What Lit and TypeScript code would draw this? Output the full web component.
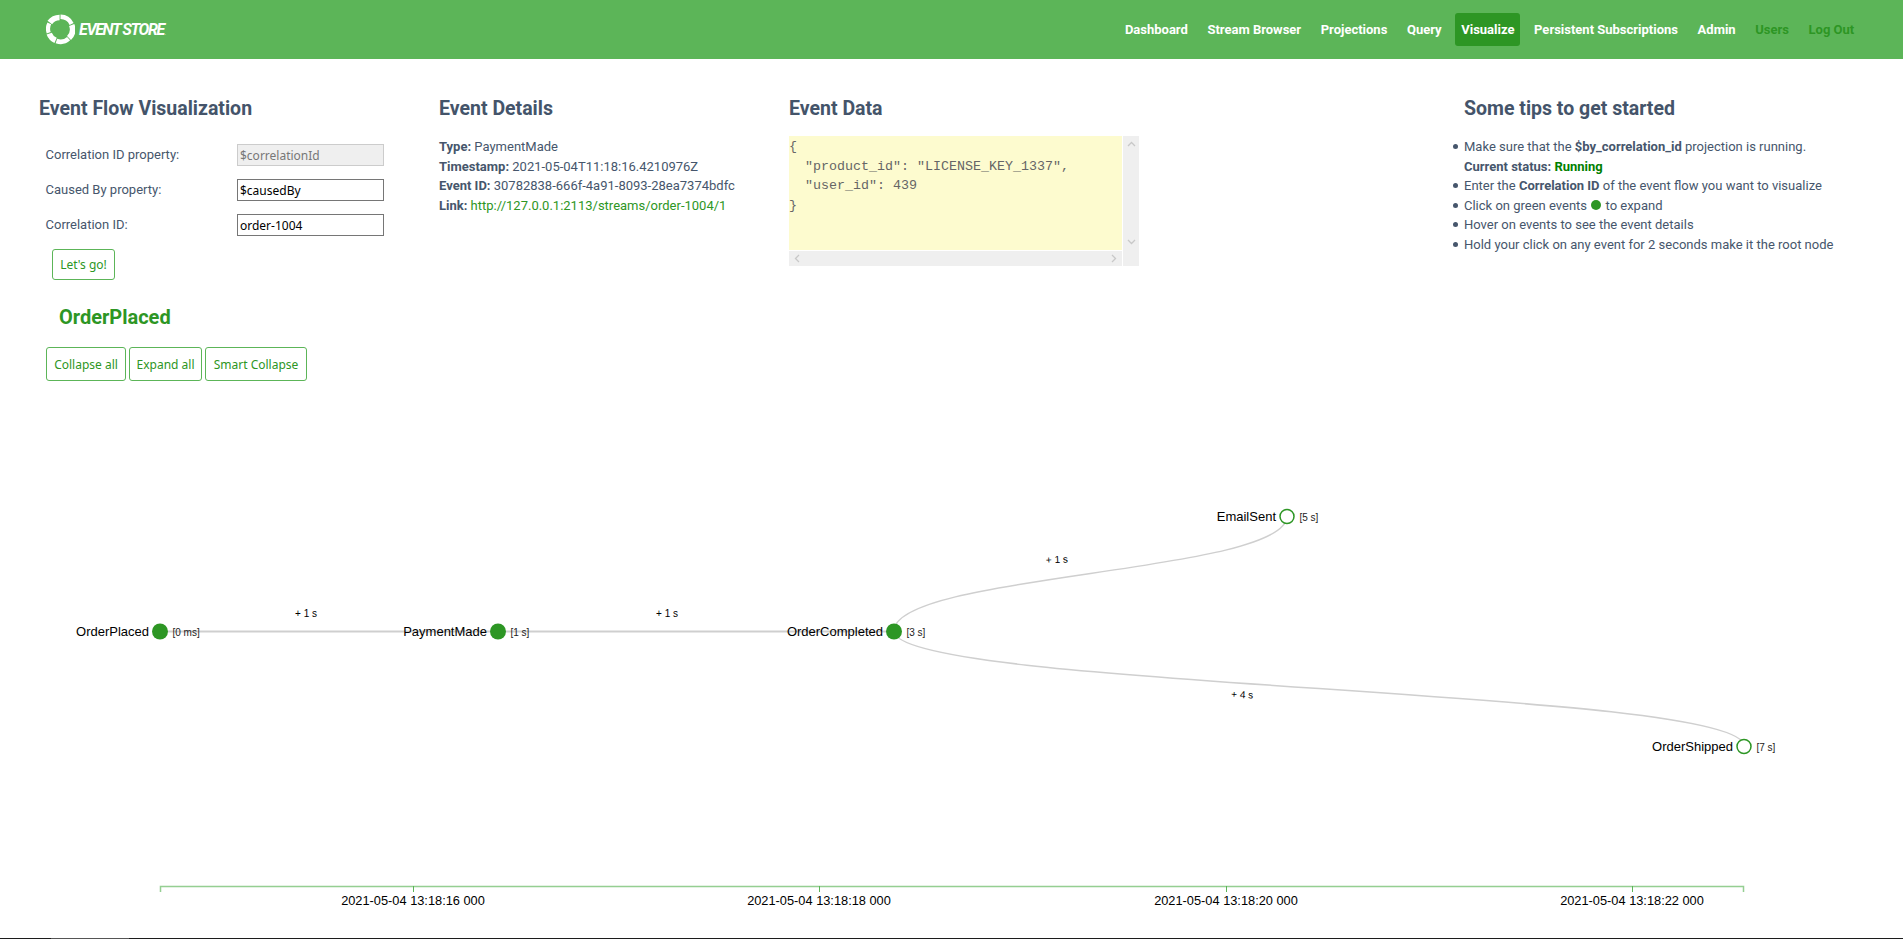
import { LitElement, html, css, svg } from "lit";
import { customElement } from "lit/decorators.js";

const NAV = [
  ["Dashboard", ""], ["Stream Browser", ""], ["Projections", ""], ["Query", ""], ["Visualize", "active"],
  ["Persistent Subscriptions", ""], ["Admin", ""], ["Users", "dim"], ["Log Out", "dim"],
];
const NODES = [
  { x: 160, y: 631, name: "OrderPlaced", t: "[0 ms]", filled: true },
  { x: 498, y: 631, name: "PaymentMade", t: "[1 s]", filled: true },
  { x: 894, y: 631, name: "OrderCompleted", t: "[3 s]", filled: true },
  { x: 1287, y: 516, name: "EmailSent", t: "[5 s]", filled: false },
  { x: 1744, y: 746, name: "OrderShipped", t: "[7 s]", filled: false },
];
const LINKS = [
  { d: "M160,631.5 L498,631.5", w: 2 },
  { d: "M498,631.5 L894,631.5", w: 2 },
  { d: "M894,631 C894,573.5 1287,573.5 1287,516", w: 1.5 },
  { d: "M894,631 C894,688.5 1744,688.5 1744,746", w: 1.5 },
];
const LINK_LABELS = [
  { x: 306, y: 617, t: "+ 1 s", r: 0 },
  { x: 667, y: 617, t: "+ 1 s", r: 0 },
  { x: 1057, y: 563, t: "+ 1 s", r: -3 },
  { x: 1242, y: 698, t: "+ 4 s", r: 3 },
];
const TICKS = [
  { x: 413, t: "2021-05-04 13:18:16 000" },
  { x: 819, t: "2021-05-04 13:18:18 000" },
  { x: 1226, t: "2021-05-04 13:18:20 000" },
  { x: 1632, t: "2021-05-04 13:18:22 000" },
];

@customElement("app-root")
export class AppRoot extends LitElement {
  static styles = css`
    :host { display: block; height: 939px; overflow: hidden; background: #fff; font-family: Roboto, "Liberation Sans", sans-serif; font-size: 13px; line-height: 19.5px; color: #46566c; }
    header { height: 59px; background: #5cb558; display: flex; align-items: center; justify-content: space-between; padding: 0 39px 0 46px; }
    .logo { display: flex; align-items: center; gap: 4px; color: #fff; }
    .logo svg { display: block; }
    .logo span { font: italic 700 16px/1 Roboto, sans-serif; letter-spacing: -1.35px; white-space: nowrap; }
    .logo small { font-size: 4px; letter-spacing: 0; margin-left: 1px; }
    nav { display: flex; align-items: center; gap: 0; }
    nav a { display: block; padding: 0 9.8px; height: 33px; line-height: 33px; border-radius: 3px; color: #fff; font-weight: 700; font-size: 13px; white-space: nowrap; }
    nav a.active { background: #2d9624; padding: 0 6px; margin: 0 3.8px; }
    nav a.dim { color: #2d9624; }
    .top { height: 341px; display: grid; grid-template-columns: 400px 350px 674px 1fr; padding: 40px 0 0 39px; box-sizing: border-box; }
    h2 { margin: 0; font-size: 19.5px; line-height: 20px; font-weight: 700; color: #44546a; height: 37px; }
    .details h2, .tips h2 { height: 38px; }
    .tips h2 { margin-left: 1px; }
    .form { display: grid; grid-template-columns: 191.5px 147px; row-gap: 13px; align-items: center; padding: 8px 0 0 6.5px; }
    .form label { line-height: 22px; }
    input { box-sizing: border-box; width: 147px; height: 22px; margin: 0; padding: 0 2px; border: 1px solid #767676; border-radius: 0; font: 12px "Noto Sans", sans-serif; color: #000; background: #fff; outline: none; }
    input:disabled { background: #efefef; border-color: #ccc; color: #777; }
    .btn { box-sizing: border-box; display: inline-flex; align-items: center; justify-content: center; height: 34px; border: 1px solid #5cb558; border-radius: 3px; background: #fff; color: #2d9624; font: 12px "Noto Sans", sans-serif; padding: 0; }
    .go { width: 63px; height: 31px; margin: 13px 0 0 13px; display: flex; }
    .sel { margin: 26px 0 0 20px; font-size: 20px; line-height: 22px; font-weight: 700; color: #2d9624; }
    .btns { display: flex; gap: 3px; margin: 19px 0 0 7px; }
    .details { line-height: 19.5px; white-space: nowrap; }
    .details a { color: #2d9624; }
    b { font-weight: 700; }
    .data { display: grid; grid-template-columns: 333px 17px; grid-template-rows: 114px 16px; width: 350px; column-gap: 0; background: #fff; }
    .yellow { background: #fdfbcf; font: 13.33px/19.5px "Liberation Mono", monospace; color: #666; white-space: pre; padding-top: 1px; box-sizing: border-box; }
    .vbar { grid-row: 1 / 3; grid-column: 2; background: #efefef; margin-left: 1px; display: flex; flex-direction: column; justify-content: space-between; align-items: center; padding: 4px 0 20px; box-sizing: border-box; }
    .hbar { background: #efefef; margin-top: 1px; display: flex; justify-content: space-between; align-items: center; padding: 0 4px; }
    .vbar svg, .hbar svg { display: block; }
    ul { margin: 0; padding: 0 0 0 1px; list-style: none; }
    .tips li { position: relative; }
    .tips li::before { content: ""; position: absolute; left: -11px; top: 7px; width: 5px; height: 5px; border-radius: 50%; background: #46566c; }
    .status { color: #008000; font-weight: 700; }
    .dot { display: inline-block; width: 10px; height: 10px; border-radius: 50%; background: #2d9624; vertical-align: 0; margin: 0 1px; }
    svg.graph { display: block; width: 1903px; height: 538px; }
    .link { fill: none; stroke: #cfcfcf; }
    .nm { font: 13px "Liberation Sans", sans-serif; fill: #000; text-anchor: end; }
    .tm { font: 10px "Liberation Sans", sans-serif; fill: #222; }
    .ll { font: 10px "Liberation Sans", sans-serif; fill: #000; text-anchor: middle; }
    .axis { font: 12.8px "Liberation Sans", sans-serif; fill: #000; text-anchor: middle; }
    .edge { height: 1px; background: linear-gradient(90deg, #1c1c1c 51px, #555 51px, #555 129px, #1c1c1c 129px); }
  `;

  private chev(rot: number) {
    return html`<svg width="9" height="9" viewBox="0 0 9 9" style="transform:rotate(${rot}deg)"><path d="M1 6 L4.5 2.5 L8 6" fill="none" stroke="#c8c8c8" stroke-width="1.3"/></svg>`;
  }

  render() {
    return html`
      <header>
        <div class="logo">
          <svg width="29" height="31" viewBox="0 0 29 31" fill="none" stroke="#fff">
            <path d="M3.8 8.5 A12 12 0 0 1 13.6 3.5" stroke-width="5.6"/>
            <path d="M14.5 2.8 A12.4 12.4 0 0 1 25.6 10" stroke-width="4.4"/>
            <path d="M25.7 11 A12 12 0 0 1 23 24" stroke-width="5.6"/>
            <path d="M22.6 24.6 A12 12 0 0 1 10.4 27" stroke-width="4.6"/>
            <path d="M9.6 26.4 A12 12 0 0 1 3.2 19.6" stroke-width="5.6"/>
            <path d="M2.7 18.8 A12 12 0 0 1 3.3 9.4" stroke-width="4.2"/>
          </svg>
          <span>EVENT STORE<small>.</small></span>
        </div>
        <nav>${NAV.map(([t, c]) => html`<a class=${c}>${t}</a>`)}</nav>
      </header>
      <section class="top">
        <div>
          <h2>Event Flow Visualization</h2>
          <div class="form">
            <label>Correlation ID property:</label><input disabled .value=${"$correlationId"} />
            <label>Caused By property:</label><input .value=${"$causedBy"} />
            <label>Correlation ID:</label><input .value=${"order-1004"} />
          </div>
          <button class="btn go">Let's go!</button>
          <div class="sel">OrderPlaced</div>
          <div class="btns">
            <button class="btn" style="width:80px">Collapse all</button>
            <button class="btn" style="width:73px">Expand all</button>
            <button class="btn" style="width:102px">Smart Collapse</button>
          </div>
        </div>
        <div class="details">
          <h2>Event Details</h2>
          <div><b>Type:</b> PaymentMade</div>
          <div><b>Timestamp:</b> 2021-05-04T11:18:16.4210976Z</div>
          <div><b>Event ID:</b> 30782838-666f-4a91-8093-28ea7374bdfc</div>
          <div><b>Link:</b> <a>http://127.0.0.1:2113/streams/order-1004/1</a></div>
        </div>
        <div>
          <h2>Event Data</h2>
          <div class="data">
            <div class="yellow">{
  "product_id": "LICENSE_KEY_1337",
  "user_id": 439
}</div>
            <div class="vbar">${this.chev(0)}${this.chev(180)}</div>
            <div class="hbar">${this.chev(-90)}${this.chev(90)}</div>
          </div>
        </div>
        <div class="tips">
          <h2>Some tips to get started</h2>
          <ul>
            <li>Make sure that the <b>$by_correlation_id</b> projection is running.<br /><b>Current status: </b><span class="status">Running</span></li>
            <li>Enter the <b>Correlation ID</b> of the event flow you want to visualize</li>
            <li>Click on green events <span class="dot"></span> to expand</li>
            <li>Hover on events to see the event details</li>
            <li>Hold your click on any event for 2 seconds make it the root node</li>
          </ul>
        </div>
      </section>
      <svg class="graph" viewBox="0 400 1903 538">
        ${LINKS.map((l) => svg`<path class="link" d=${l.d} stroke-width=${l.w}></path>`)}
        ${LINK_LABELS.map((l) => svg`<text class="ll" x=${l.x} y=${l.y} transform="rotate(${l.r} ${l.x} ${l.y})">${l.t}</text>`)}
        ${NODES.map((n) => svg`
          <circle cx=${n.x} cy=${n.y + 0.5} r=${n.filled ? 8 : 7} fill=${n.filled ? "#2d9624" : "#fff"} stroke="#2d9624" stroke-width=${n.filled ? 0 : 1.5}></circle>
          <text class="nm" x=${n.x - 11} y=${n.y + 5}>${n.name}</text>
          <text class="tm" x=${n.x + 12.5} y=${n.y + 5}>${n.t}</text>`)}
        <path d="M160.5,892 V886.5 H1743.5 V892" fill="none" stroke="#5cb558" stroke-opacity=".65" stroke-width="1.5"></path>
        ${TICKS.map((t) => svg`
          <path d="M${t.x}.5,886 V892" stroke="#5cb558" stroke-width="1"></path>
          <text class="axis" x=${t.x} y=${905}>${t.t}</text>`)}
      </svg>
      <div class="edge"></div>
    `;
  }
}
